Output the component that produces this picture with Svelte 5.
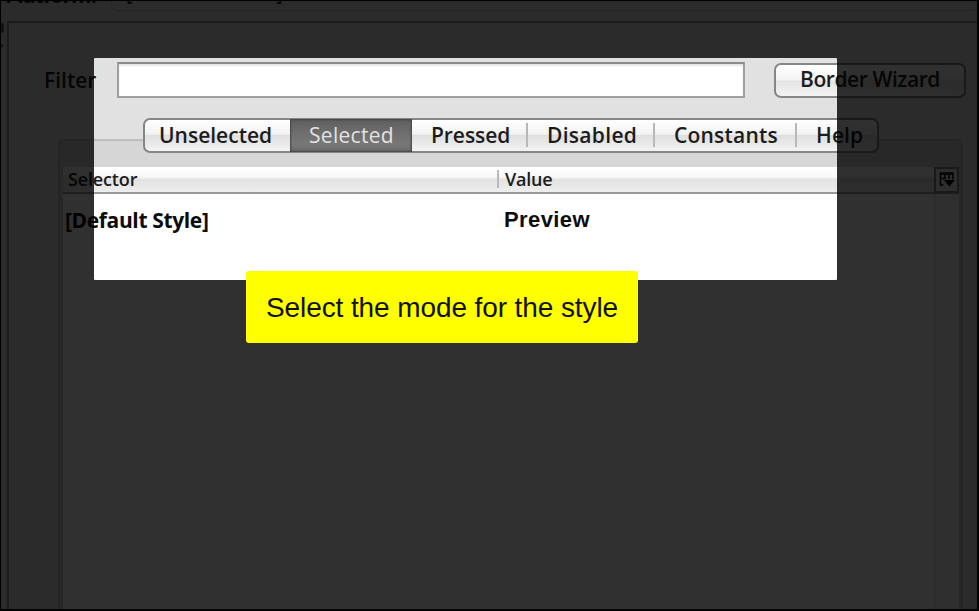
<script>
  const modes = [
    { label: 'Unselected', key: 'unselected' },
    { label: 'Selected', key: 'selected' },
    { label: 'Pressed', key: 'pressed' },
    { label: 'Disabled', key: 'disabled' },
    { label: 'Constants', key: 'constants' },
    { label: 'Help', key: 'help' }
  ];
  let active = $state('selected');
</script>

<main class="screen">
  <header class="platform">
    <span class="platform-label">Platform:</span>
    <span class="combo"><span>[</span><span>]</span></span>
  </header>

  <div class="content">
    <div class="gutter"><i></i><i></i></div>
    <section class="panel">
      <div class="filter-row">
        <label for="filter">Filter</label>
        <input id="filter" type="text" />
        <button class="wizard" type="button"><span>Border Wizard</span></button>
      </div>

      <nav class="tabs">
        {#each modes as mode}
          <button
            type="button"
            class="tab {mode.key}"
            class:active={active === mode.key}
            onclick={() => (active = mode.key)}><span>{mode.label}</span></button>
        {/each}
      </nav>

      <div class="group">
        <div class="table">
          <div class="head">
            <span class="selector">Selector</span>
            <span class="value">Value</span>
            <span class="corner">
              <svg width="17" height="17" viewBox="0 0 17 17">
                <path d="M5.5 14H2.5V2H15V8.5M2.5 3H15M6.8 2V8M11 2V8M2.5 7.5H8" fill="none" stroke="#181818" stroke-width="1.6" />
                <path d="M5.8 9H17L11.4 15.5Z" fill="#000" />
              </svg>
            </span>
          </div>
          <div class="body">
            <div class="row">
              <span class="name">[Default Style]</span>
              <span class="preview">Preview</span>
            </div>
            <div class="scroll"></div>
          </div>
        </div>
      </div>
    </section>
  </div>

  <div class="spotlight"></div>
  <div class="hint"><span>Select the mode for the style</span></div>
  <div class="frame"></div>
</main>

<style>
  :global(body) { background: #000; }
  .screen {
    position: relative;
    display: flex;
    flex-direction: column;
    box-sizing: border-box;
    width: 979px;
    height: 611px;
    overflow: hidden;
    background: #e2e2e2;
    color: #1c1c1c;
    font-family: "Open Sans", "Noto Sans", sans-serif;
    font-size: 21px;
    font-weight: 600;
  }
  .platform {
    display: flex;
    flex: none;
    height: 21px;
    overflow: hidden;
    white-space: nowrap;
  }
  .platform-label { width: 106px; padding-left: 5px; line-height: 24px; margin-top: -17px; letter-spacing: -0.85px; font-weight: 700; }
  .combo {
    display: flex;
    flex: 1;
    justify-content: flex-start;
    gap: 144px;
    height: 23px;
    margin-top: -14px;
    padding-left: 14px;
    border: 1px solid #bbb;
    border-radius: 6px;
    line-height: 12px;
    font-size: 19px;
  }
  .content { flex: 1; display: flex; min-height: 0; }
  .gutter { width: 7px; }
  .gutter i { display: block; width: 4px; height: 10px; margin-top: 2px; border-radius: 0 2px 2px 0; background: #666; }
  .gutter i + i { height: 3px; margin-top: 11px; width: 3px; }
  .panel {
    flex: 1;
    display: flex;
    flex-direction: column;
    border: solid #969696;
    border-width: 2px 0 0 2px;
    background: #e1e1e1;
    min-width: 0;
    min-height: 0;
  }
  .filter-row { display: flex; flex: none; height: 36px; padding: 39px 13px 0 35px; }
  label { width: 73px; line-height: 36px; letter-spacing: 0; }
  input {
    box-sizing: border-box;
    width: 628px;
    height: 36px;
    border: 2px solid #a0a0a0;
    border-top-color: #8a8a8a;
    background: #fff;
    box-shadow: inset 0 2px 2px #e4e4e4;
    outline: none;
    padding: 0;
  }
  button { font: inherit; color: inherit; padding: 0; margin: 0; white-space: nowrap; }
  .wizard {
    box-sizing: border-box;
    width: 192px;
    height: 35px;
    margin: 1px 0 0 29px;
    border: 2px solid #868686;
    border-radius: 7px;
    background: linear-gradient(#fff 0, #f3f3f3 48%, #e3e3e3 52%, #f4f4f4 100%);
    letter-spacing: -0.42px;
    line-height: 28px;
  }
  .wizard span { display: block; height: 31px; }
  .tabs {
    position: relative;
    z-index: 1;
    display: flex;
    flex: none;
    box-sizing: border-box;
    width: 736px;
    height: 35px;
    margin: 20px 0 0 134px;
    border: 2px solid #868686;
    border-radius: 7px;
    background: linear-gradient(#fff 0, #f2f2f2 46%, #dfdfdf 50%, #f3f3f3 100%);
  }
  .tab { display: block; position: relative; border: 0; background: none; line-height: 29px; text-align: left; }
  .unselected { width: 145px; padding-left: 14px; letter-spacing: 0; }
  .selected { width: 122px; padding-left: 19px; letter-spacing: 0.3px; }
  .pressed { width: 115px; padding-left: 19px; letter-spacing: -0.05px; }
  .disabled { width: 127px; padding-left: 20px; letter-spacing: 0.3px; }
  .constants { width: 142px; padding-left: 20px; letter-spacing: 0.2px; }
  .help { flex: 1; padding-left: 20px; letter-spacing: 0.1px; }
  .disabled::before, .constants::before, .help::before {
    content: "";
    position: absolute;
    left: -1px;
    top: 3px;
    width: 2px;
    height: 24px;
    background: #b8b8b8;
  }
  .active {
    height: 33px;
    margin-top: -1px;
    box-sizing: border-box;
    background: linear-gradient(#5f5f5f, #6d6d6d 40%, #777 75%, #6b6b6b);
    box-shadow: inset 0 0 2px 1px #444;
    color: #e2e2e2;
    font-weight: 400;
    line-height: 31px;
  }
  .group {
    flex: 1;
    display: flex;
    box-sizing: border-box;
    width: 905px;
    min-height: 0;
    margin: -14px 0 0 49px;
    padding: 26px 2px 0 3px;
    border: solid #bdbdbd;
    border-width: 2px 2px 0;
    border-radius: 6px 6px 0 0;
    background: #d6d6d6;
  }
  .table { flex: 1; display: flex; flex-direction: column; width: 897px; background: #fff; }
  .head {
    display: flex;
    flex: none;
    box-sizing: border-box;
    height: 27px;
    border-bottom: 2px solid #999;
    background: linear-gradient(#fff 0, #f8f8f8 40%, #e2e2e2 50%, #eee 100%);
    font-size: 18px;
    line-height: 24px;
  }
  .selector { width: 429px; padding-left: 5px; letter-spacing: -0.15px; }
  .value { height: 18px; margin-top: 3px; line-height: 18px; padding-left: 6px; border-left: 2px solid #b8b8b8; flex: 1; letter-spacing: -0.2px; }
  .corner { box-sizing: border-box; width: 25px; height: 26px; padding: 2px; border: 2px solid #858585; background: #eee; }
  .corner svg { display: block; }
  .body { flex: 1; display: flex; }
  .row { display: flex; flex: 1; height: 52px; line-height: 52px; color: #0c0c0c; font-weight: 700; }
  .name { width: 440px; padding-left: 2px; letter-spacing: -0.36px; }
  .preview { font-family: "Liberation Sans", Arial, sans-serif; font-size: 22px; letter-spacing: 0.4px; margin-left: -1px; }
  .scroll { width: 23px; border-left: 2px solid #e8e8e8; background: #fafafa; }
  .spotlight {
    position: absolute;
    z-index: 2;
    left: 94px;
    top: 58px;
    width: 743px;
    height: 222px;
    border-radius: 1px;
    box-shadow: 0 0 0 1000px rgba(0, 0, 0, 0.81);
  }
  .hint {
    position: absolute;
    z-index: 3;
    left: 246px;
    top: 271px;
    width: 392px;
    height: 72px;
    border-radius: 3px;
    background: #ff0;
    color: #111100;
    font: 400 28px/74px "Liberation Sans", Arial, sans-serif;
    letter-spacing: -0.1px;
    text-align: center;
    white-space: nowrap;
  }
  .frame {
    position: absolute;
    z-index: 4;
    inset: 0;
    border: solid #000;
    border-width: 1px 2px 2px 1px;
  }
</style>
